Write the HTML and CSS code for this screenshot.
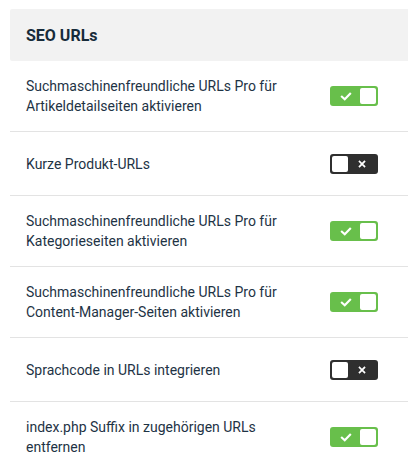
FILE: index.html
```html
<!DOCTYPE html>
<html lang="de">
<head>
    <meta charset="UTF-8">
    <title>SEO URLs</title>
    <link rel="stylesheet" href="styles.css">
</head>
<body>
<div class="panel">
    <div class="panel-head">SEO URLs</div>

    <div class="row">
        <div class="label">Suchmaschinenfreundliche URLs Pro für Artikeldetailseiten aktivieren</div>
        <span class="switch on">
            <svg class="mark" viewBox="0 0 12 10"><polyline points="1.5,5.2 4.6,8 10.5,2"/></svg>
            <span class="knob"></span>
        </span>
    </div>
    <div class="row">
        <div class="label">Kurze Produkt-URLs</div>
        <span class="switch off">
            <span class="knob"></span>
            <svg class="mark" viewBox="0 0 10 10"><path d="M2 2 L8 8 M8 2 L2 8"/></svg>
        </span>
    </div>
    <div class="row">
        <div class="label">Suchmaschinenfreundliche URLs Pro für Kategorieseiten aktivieren</div>
        <span class="switch on">
            <svg class="mark" viewBox="0 0 12 10"><polyline points="1.5,5.2 4.6,8 10.5,2"/></svg>
            <span class="knob"></span>
        </span>
    </div>
    <div class="row">
        <div class="label">Suchmaschinenfreundliche URLs Pro für Content-Manager-Seiten aktivieren</div>
        <span class="switch on">
            <svg class="mark" viewBox="0 0 12 10"><polyline points="1.5,5.2 4.6,8 10.5,2"/></svg>
            <span class="knob"></span>
        </span>
    </div>
    <div class="row">
        <div class="label">Sprachcode in URLs integrieren</div>
        <span class="switch off">
            <span class="knob"></span>
            <svg class="mark" viewBox="0 0 10 10"><path d="M2 2 L8 8 M8 2 L2 8"/></svg>
        </span>
    </div>
    <div class="row">
        <div class="label">index.php Suffix in zugehörigen URLs entfernen</div>
        <span class="switch on">
            <svg class="mark" viewBox="0 0 12 10"><polyline points="1.5,5.2 4.6,8 10.5,2"/></svg>
            <span class="knob"></span>
        </span>
    </div>
</div>
</body>
</html>
```

FILE: styles.css
```css
* {
    margin: 0;
    padding: 0;
    box-sizing: border-box;
}
body {
    background: #fff;
    font-family: Roboto, "Liberation Sans", sans-serif;
    color: #1e3345;
    padding: 9px 0 0 10px;
    overflow: hidden;
}
.panel {
    width: 398px;
}
.panel-head {
    background: #f2f2f2;
    height: 52px;
    padding: 0 16px;
    display: flex;
    align-items: center;
    font-size: 16px;
    font-weight: 700;
    color: #172b3a;
    border-radius: 2px 0 0 2px;
}
.row {
    display: flex;
    align-items: center;
    min-height: 64px;
    padding: 15px 30px 15px 16px;
    border-bottom: 1px solid #e3e3e3;
}
.row:last-child {
    border-bottom: none;
}
.label {
    width: 290px;
    font-size: 14px;
    line-height: 20px;
}
.switch {
    margin-left: auto;
    width: 48px;
    height: 20px;
    border-radius: 3px;
    padding: 2px;
    display: flex;
    align-items: center;
}
.switch.on {
    background: #68bf4b;
}
.switch.off {
    background: #2f2f2f;
}
.knob {
    width: 16px;
    height: 16px;
    background: #fff;
    border-radius: 2px;
}
.mark {
    flex: 1;
    height: 9px;
    fill: none;
    stroke: #fff;
    stroke-width: 2.4;
    stroke-linecap: square;
}
.switch.off .mark {
    height: 8px;
    stroke-width: 2.2;
}
```
